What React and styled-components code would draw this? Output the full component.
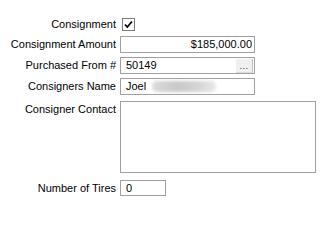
import React from "react";
import styled, { createGlobalStyle } from "styled-components";

const Global = createGlobalStyle`
  html, body { margin: 0; padding: 0; background: #ffffff; }
  body { font-family: "Liberation Sans", Arial, sans-serif; font-size: 11px; color: #000; }
`;

const Form = styled.div`
  display: flex;
  flex-direction: column;
  padding-top: 16px;
  width: 325px;
  height: 205px;
  box-sizing: border-box;
  background: #fff;
`;

const Row = styled.div`
  display: flex;
  align-items: ${(p) => (p.$top ? "flex-start" : "center")};
  margin-top: ${(p) => p.$mt || 0}px;
  height: ${(p) => p.$h}px;
`;

const Label = styled.div`
  width: 116px;
  padding-right: 4px;
  box-sizing: content-box;
  text-align: right;
  white-space: nowrap;
  line-height: 13px;
  padding-top: ${(p) => p.$pt || 0}px;
`;

const CheckBox = styled.div`
  width: 11px;
  height: 11px;
  margin-left: 2px;
  border: 1px solid #7a7a7a;
  background: #fff;
  display: flex;
  align-items: center;
  justify-content: center;
`;

const Field = styled.div`
  width: ${(p) => p.$w}px;
  height: 100%;
  box-sizing: border-box;
  border: 1px solid #a0a0a0;
  background: #fff;
  display: flex;
  align-items: ${(p) => (p.$top ? "flex-start" : "center")};
  justify-content: ${(p) => (p.$right ? "flex-end" : "flex-start")};
  padding: 0 1px 0 5px;
  line-height: 13px;
`;

const Value = styled.span`
  flex: ${(p) => (p.$grow ? 1 : "none")};
  padding-right: ${(p) => (p.$right ? 1 : 0)}px;
`;

const EllipsisButton = styled.div`
  width: 17px;
  height: 14px;
  box-sizing: border-box;
  background: #f0f0f0;
  border-right: 1px solid #c0c0c0;
  border-bottom: 1px solid #dcdcdc;
  color: #1a1a80;
  font-family: "DejaVu Sans", sans-serif;
  font-size: 8px;
  line-height: 16px;
  letter-spacing: 0.5px;
  text-align: center;
  overflow: hidden;
`;

const Blur = styled.span`
  display: inline-block;
  width: 64px;
  height: 11px;
  margin-left: 6px;
  border-radius: 5px;
  background: linear-gradient(90deg, #dcdcdc, #c8c8c8 40%, #d4d4d4 70%, #e8e8e8);
  filter: blur(1.5px);
`;

export default function App() {
  return (
    <>
      <Global />
      <Form>
        <Row $h={13} $mt={2}>
          <Label>Consignment</Label>
          <CheckBox>
            <svg width="9" height="9" viewBox="0 0 9 9">
              <path d="M1 4.5 L3.3 7 L8 1.5" stroke="#000" strokeWidth="1.8" fill="none" />
            </svg>
          </CheckBox>
        </Row>
        <Row $h={17} $mt={5}>
          <Label>Consignment Amount</Label>
          <Field $w={135} $right>
            <Value $right>$185,000.00</Value>
          </Field>
        </Row>
        <Row $h={17} $mt={4}>
          <Label>Purchased From #</Label>
          <Field $w={135}>
            <Value $grow>50149</Value>
            <EllipsisButton>...</EllipsisButton>
          </Field>
        </Row>
        <Row $h={17} $mt={4}>
          <Label>Consigners Name</Label>
          <Field $w={135}>
            <Value>Joel</Value>
            <Blur />
          </Field>
        </Row>
        <Row $h={72} $mt={6} $top>
          <Label $pt={2}>Consigner Contact</Label>
          <Field $w={196} $top />
        </Row>
        <Row $h={16} $mt={7}>
          <Label>Number of Tires</Label>
          <Field $w={46}>
            <Value>0</Value>
          </Field>
        </Row>
      </Form>
    </>
  );
}
